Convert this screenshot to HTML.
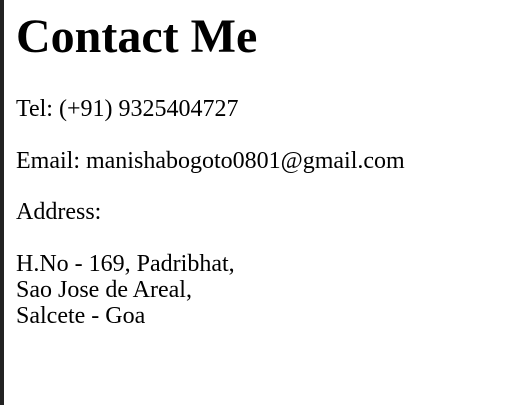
<!DOCTYPE html>
<html><head><style>
html,body{margin:0;padding:0;background:#fff;}
body{width:527px;height:405px;position:relative;overflow:hidden;font-family:"Liberation Serif",serif;color:#000;}
.bar{position:absolute;left:0;top:0;width:4px;height:405px;background:#222;}
h1{position:absolute;left:16px;top:8px;margin:0;font-size:48px;line-height:58px;font-weight:bold;}
p{position:absolute;left:16px;margin:0;font-size:24px;line-height:26px;white-space:nowrap;}
</style></head><body>
<div class="bar"></div>
<h1>Contact Me</h1>
<p style="top:96px">Tel: (+91) 9325404727</p>
<p style="top:148px">Email: manishabogoto0801@gmail.com</p>
<p style="top:199px">Address:</p>
<p style="top:251px">H.No - 169, Padribhat,<br>Sao Jose de Areal,<br>Salcete - Goa</p>
</body></html>
